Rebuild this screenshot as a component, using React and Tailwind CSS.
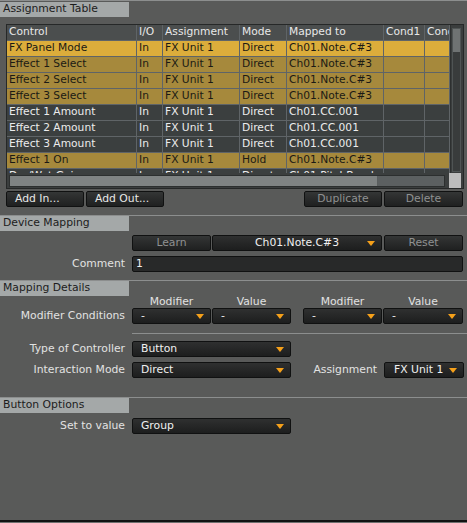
import React from "react";

const BRIGHT = "bright";
const GOLD = "gold";
const DARK = "dark";

const rows = [
  [BRIGHT, "FX Panel Mode", "In", "FX Unit 1", "Direct", "Ch01.Note.C#3"],
  [GOLD, "Effect 1 Select", "In", "FX Unit 1", "Direct", "Ch01.Note.C#3"],
  [GOLD, "Effect 2 Select", "In", "FX Unit 1", "Direct", "Ch01.Note.C#3"],
  [GOLD, "Effect 3 Select", "In", "FX Unit 1", "Direct", "Ch01.Note.C#3"],
  [DARK, "Effect 1 Amount", "In", "FX Unit 1", "Direct", "Ch01.CC.001"],
  [DARK, "Effect 2 Amount", "In", "FX Unit 1", "Direct", "Ch01.CC.001"],
  [DARK, "Effect 3 Amount", "In", "FX Unit 1", "Direct", "Ch01.CC.001"],
  [GOLD, "Effect 1 On", "In", "FX Unit 1", "Hold", "Ch01.Note.C#3"],
  [DARK, "Dry/Wet Gain", "In", "FX Unit 1", "Direct", "Ch01.PitchBend"],
];

const rowBg = {
  bright: "bg-[#dcad3b] text-[#1b1a14]",
  gold: "bg-[#a6893c] text-[#1b1a14]",
  dark: "bg-[#3b3f3f] text-[#ececec]",
};

function Arrow() {
  return (
    <svg width="8" height="5" viewBox="0 0 8 5" className="shrink-0">
      <path d="M0 0H8L4 5Z" fill="#f5a01a" />
    </svg>
  );
}

function SectionHeader({ title, extraTop }) {
  return (
    <div className={`border-t border-[#8c8e8e] ${extraTop ? "pt-[1px]" : ""}`}>
      <div className="w-[129px] h-[15px] bg-[#a4a8a8] text-[#1c1c1c] pl-[3px] flex items-center leading-none">
        {title}
      </div>
    </div>
  );
}

function Btn({ children, className = "", dim, left }) {
  return (
    <div
      className={`h-[16px] rounded-[2px] border border-[#101111] bg-linear-to-b from-[#343636] to-[#1f2020] flex items-center leading-none ${
        left ? "pl-[8px]" : "justify-center"
      } ${dim ? "text-[#8f9191]" : "text-[#e8e8e8]"} ${className}`}
    >
      {children}
    </div>
  );
}

function Dropdown({ text, className = "", center, pl = "pl-[8px]" }) {
  return (
    <div
      className={`h-[16px] rounded-[2px] border border-[#101111] bg-linear-to-b from-[#2f3030] to-[#1d1e1e] flex items-center ${pl} pr-[6px] text-[#f0f0f0] leading-none ${className}`}
    >
      <span className={`flex-1 ${center ? "text-center" : ""}`}>{text}</span>
      <Arrow />
    </div>
  );
}

function Label({ children, className = "w-[125px]" }) {
  return <div className={`${className} text-right text-[#e2e2e2] leading-none shrink-0`}>{children}</div>;
}

const cols = "grid grid-cols-[130px_26px_77px_47px_97px_41px_25px]";

function Cell({ children }) {
  return (
    <div className="h-[16px] border-r border-b border-[#5f6467] pl-[2px] flex items-center whitespace-nowrap overflow-hidden leading-none">
      {children}
    </div>
  );
}

export default function App() {
  return (
    <div className="w-[467px] h-[523px] bg-[#595a59] flex flex-col font-['DejaVu_Sans',sans-serif] text-[10.8px] overflow-hidden">
      <SectionHeader title="Assignment Table" extraTop />

      {/* Table */}
      <div className="mt-[7px] ml-[6px] w-[458px] border border-[#262828] bg-[#3b3e3e] flex flex-col">
        <div className="flex h-[148px]">
          <div className="w-[443px] overflow-hidden text-[10.7px]">
            <div className={`${cols} bg-[#4b4e4e] text-[#e8e8e8]`}>
              {["Control", "I/O", "Assignment", "Mode", "Mapped to", "Cond1", "Cond2"].map((h) => (
                <Cell key={h}>{h}</Cell>
              ))}
            </div>
            {rows.map(([kind, ...vals], i) => (
              <div key={i} className={`${cols} ${rowBg[kind]}`}>
                {vals.map((v, j) => (
                  <Cell key={j}>{v}</Cell>
                ))}
                <Cell />
                <Cell />
              </div>
            ))}
          </div>
          <div className="w-[13px] bg-[#3a3d3d] pl-[1px] pr-[2px] pt-[3px] pb-[1px] border-l border-[#2d3030]">
            <div className="h-full border border-[#4f5454] bg-[#393c3c]">
              <div className="h-[23px] bg-[#6f7373]" />
            </div>
          </div>
        </div>
        <div className="h-[15px] flex items-center">
          <div className="ml-[2px] w-[436px] h-[12px] border border-[#2c2f2f] bg-[#5c6061] flex">
            <div className="w-[368px] h-full bg-[#7f8383] border-r border-[#5a5e5e]" />
          </div>
          <div className="ml-[4px] w-[12px] h-[15px] bg-[#bdbdbd]" />
        </div>
      </div>

      {/* Buttons */}
      <div className="mt-[2px] ml-[6px] flex">
        <Btn className="w-[78px]" left>Add In...</Btn>
        <Btn className="w-[78px] ml-[2px]" left>Add Out...</Btn>
        <Btn className="w-[78px] ml-[140px]" dim>Duplicate</Btn>
        <Btn className="w-[79px] ml-[2px]" dim>Delete</Btn>
      </div>

      <div className="mt-[8px]">
        <SectionHeader title="Device Mapping" />
      </div>

      <div className="mt-[4px] flex ml-[132px]">
        <Btn className="w-[79px]" dim>Learn</Btn>
        <Dropdown className="w-[170px] ml-[1px]" text="Ch01.Note.C#3" center pl="pl-[14px]" />
        <Btn className="w-[79px] ml-[2px]" dim>Reset</Btn>
      </div>

      <div className="mt-[5px] flex items-center">
        <Label>Comment</Label>
        <div className="ml-[7px] w-[331px] h-[16px] rounded-[2px] border border-[#101111] bg-[#282929] text-[#f0f0f0] pl-[3px] flex items-center leading-none">
          1
        </div>
      </div>

      <div className="mt-[8px]">
        <SectionHeader title="Mapping Details" />
      </div>

      <div className="h-[12px] flex ml-[132px] text-[#e2e2e2] leading-none items-center">
        <div className="w-[79px] text-center">Modifier</div>
        <div className="w-[79px] ml-[1px] text-center">Value</div>
        <div className="w-[79px] ml-[12px] text-center">Modifier</div>
        <div className="w-[80px] ml-[1px] text-center">Value</div>
      </div>

      <div className="flex items-center">
        <Label>Modifier Conditions</Label>
        <Dropdown className="ml-[7px] w-[79px]" text="-" />
        <Dropdown className="ml-[1px] w-[79px]" text="-" />
        <Dropdown className="ml-[12px] w-[79px]" text="-" />
        <Dropdown className="ml-[1px] w-[80px]" text="-" />
      </div>

      <div className="mt-[9px] ml-[132px] border-t border-[#8c8e8e]" />

      <div className="mt-[7px] flex items-center">
        <Label>Type of Controller</Label>
        <Dropdown className="ml-[7px] w-[159px]" text="Button" />
      </div>

      <div className="mt-[5px] flex items-center">
        <Label>Interaction Mode</Label>
        <Dropdown className="ml-[7px] w-[159px]" text="Direct" />
        <Label className="w-[86px]">Assignment</Label>
        <Dropdown className="ml-[7px] w-[80px]" text="FX Unit 1" pl="pl-[9px]" />
      </div>

      <div className="mt-[19px]">
        <SectionHeader title="Button Options" />
      </div>

      <div className="mt-[5px] flex items-center">
        <Label>Set to value</Label>
        <Dropdown className="ml-[7px] w-[159px]" text="Group" />
      </div>

      <div className="mt-auto h-[3px] border-t-2 border-[#111212] bg-[#6f706f]" />
    </div>
  );
}
